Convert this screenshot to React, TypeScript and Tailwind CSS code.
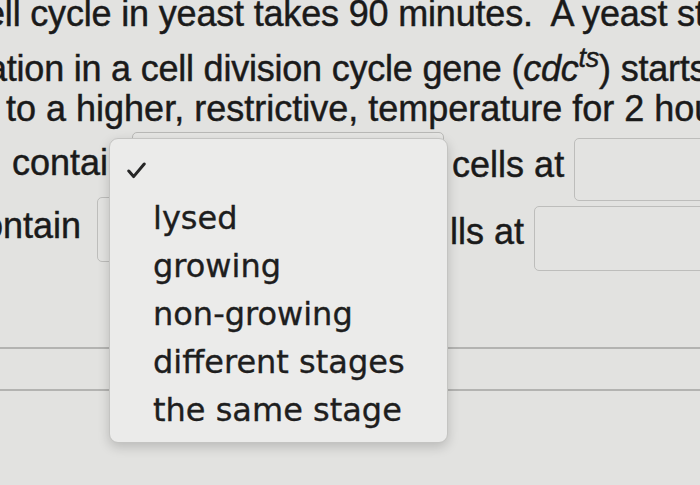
import React from "react";

const Check = () => (
  <svg width="19" height="17" viewBox="0 0 19 17" fill="none">
    <path d="M1.8 9 L6.6 14.6 L17.2 2" stroke="#262626" strokeWidth="3" strokeLinecap="round" strokeLinejoin="round" />
  </svg>
);

export default function App() {
  const items = ["lysed", "growing", "non-growing", "different stages", "the same stage"];
  return (
    <div className="relative w-[700px] h-[485px] overflow-hidden bg-[#e2e2e0] text-[#1a1a1a] font-['Liberation_Sans',Arial,sans-serif] text-[36px] [-webkit-text-stroke:0.45px_#1a1a1a]">
      <div className="flex flex-col">
        <div className="mt-[-6px] ml-[-15px] h-[40px] leading-[40px] whitespace-pre tracking-[-0.18px]">ell cycle in yeast takes 90 minutes.  A yeast strain</div>
        <div className="mt-[15px] ml-[-13px] h-[40px] leading-[40px] whitespace-pre tracking-[-0.22px]">
          ation in a cell division cycle gene (<span className="italic">cdc</span>
          <span className="italic text-[27px] leading-[0px] align-[14px]">ts</span>) starts
        </div>
        <div className="ml-[6px] h-[40px] leading-[40px] whitespace-pre">to a higher, restrictive, temperature for 2 hours</div>

        <div className="mt-[3px] flex h-[65px] items-start">
          <div className="ml-[12px] mt-[11px] leading-[40px] whitespace-pre">contain</div>
          <div className="ml-[4px] w-[312px] h-[62px] shrink-0 rounded-[5px] border border-[#b9b9b7] bg-[#e6e6e4]" />
          <div className="ml-[8px] mt-[13px] leading-[40px] whitespace-pre">cells at</div>
          <div className="ml-[10px] mt-[6px] w-[200px] h-[63px] shrink-0 rounded-[5px] border border-[#bdbdbb] bg-[#e3e3e1]" />
        </div>

        <div className="flex h-[74px] items-start">
          <div className="ml-[-17px] mt-[9px] leading-[40px] whitespace-pre">ontain</div>
          <div className="ml-[16px] w-[300px] h-[65px] shrink-0 rounded-[5px] border border-[#bdbdbb] bg-[#e3e3e1]" />
          <div className="ml-[53px] mt-[15px] leading-[40px] whitespace-pre">lls at</div>
          <div className="ml-[10px] mt-[9px] w-[200px] h-[65px] shrink-0 rounded-[5px] border border-[#bdbdbb] bg-[#e3e3e1]" />
        </div>

        <div className="mt-[76px] h-[2px] bg-[#b3b3b1]" />
        <div className="mt-[40px] h-[2px] bg-[#b3b3b1]" />
      </div>

      <div className="absolute left-[109px] top-[138px] w-[339px] h-[305px] rounded-[9px] border border-[#c4c4c2] bg-[#ebebea] shadow-[0_4px_12px_rgba(0,0,0,0.18)] pt-[7px] font-['DejaVu_Sans','Liberation_Sans',sans-serif] text-[32px] text-[#1e1e1e] [-webkit-text-stroke:0.35px_#1e1e1e]">
        <div className="h-[48px] flex items-center pl-[17px]">
          <Check />
        </div>
        {items.map((t) => (
          <div key={t} className="h-[48px] leading-[48px] pl-[43px] whitespace-pre">{t}</div>
        ))}
      </div>
    </div>
  );
}
